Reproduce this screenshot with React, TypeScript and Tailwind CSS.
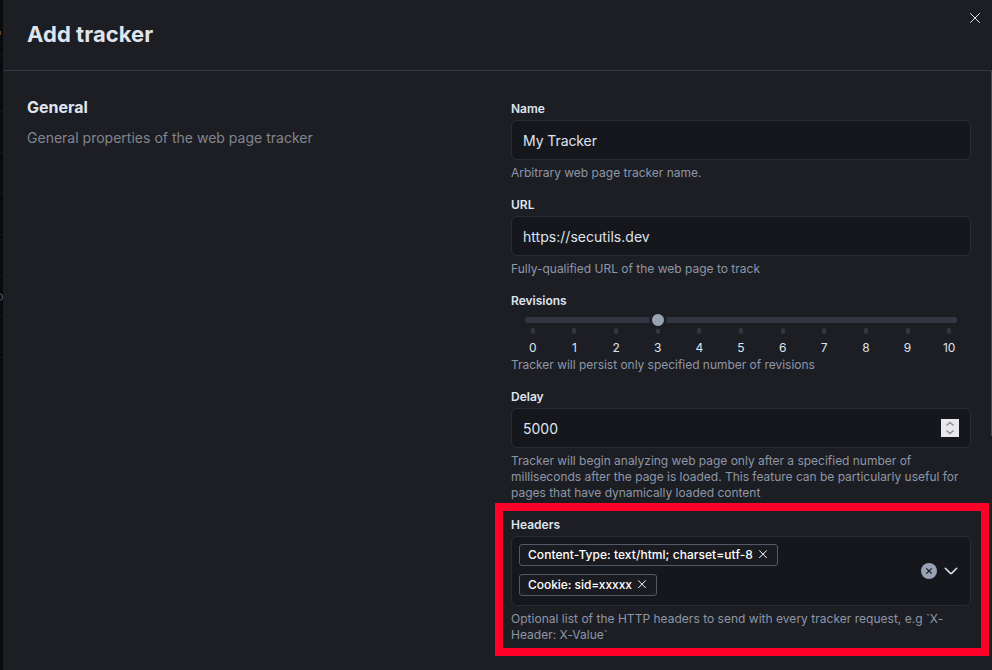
import type { ReactNode } from "react";

function Cross({ className }: { className: string }) {
  return (
    <svg viewBox="0 0 12 12" className={className} fill="none" stroke="currentColor" strokeLinecap="round">
      <path d="M1.5 1.5 10.5 10.5M10.5 1.5 1.5 10.5" />
    </svg>
  );
}

function Field({
  label,
  help,
  helpClass = "",
  children,
}: {
  label: string;
  help: string;
  helpClass?: string;
  children: ReactNode;
}) {
  return (
    <div className="flex flex-col">
      <label className="mb-[3px] h-4 text-xs leading-4 font-semibold text-[#dfe5ef]">{label}</label>
      {children}
      <p className={`pt-[5px] text-xs leading-4 text-[#8d96a7] ${helpClass}`}>{help}</p>
    </div>
  );
}

function TextBox({ value, valueClass = "", children }: { value: string; valueClass?: string; children?: ReactNode }) {
  return (
    <div className="flex h-10 items-center justify-between rounded-md border border-[#2b2c31] bg-[#16171c] px-[11px] text-sm text-[#dfe5ef]">
      <span className={`pt-0.5 ${valueClass}`}>{value}</span>
      {children}
    </div>
  );
}

function Chip({ text, textClass }: { text: string; textClass: string }) {
  return (
    <span className="flex h-[22px] items-center rounded-[3px] border border-[#535966] bg-[#1a1b20] px-2 text-xs font-medium text-white">
      <span className={textClass}>{text}</span>
      <svg viewBox="0 0 12 12" className="ml-1 size-3" fill="none" stroke="currentColor" strokeLinecap="round">
        <path d="M2.5 1.7 9.5 8.7M9.5 1.7 2.5 8.7" />
      </svg>
    </span>
  );
}

function RevisionSlider() {
  return (
    <div className="flex h-10 flex-col px-3.5 pt-[5px]">
      <div className="relative h-1.5 shrink-0 rounded-full bg-[#343741]">
        <span className="absolute top-[-6px] left-[124px] size-[18px] rounded-full border-[3px] border-[#1d1e24] bg-[#98a2b3]" />
      </div>
      <div className="-mx-[13px] mt-[5px] grid grid-cols-11">
        {Array.from({ length: 11 }, (_, i) => (
          <div key={i} className="flex flex-col items-center">
            <span className="h-1.5 w-1 rounded-[2px] bg-[#343741]" />
            <span className="mt-1.5 text-xs leading-4 text-[#dfe5ef]">{i}</span>
          </div>
        ))}
      </div>
    </div>
  );
}

export default function App() {
  return (
    <div className="flex h-[670px] w-[992px] overflow-hidden bg-[#1d1e24] font-['Inter',sans-serif]">
      <div className="relative w-[3px] shrink-0 overflow-hidden bg-[#090a0c]">
        <span className="absolute top-[31px] left-0 h-1 w-px bg-[#65472b]" />
        <span className="absolute top-[293px] -left-[5px] h-2 w-2 rounded-full border border-[#596168]" />
        {[54, 111, 152, 193, 234, 275, 316, 357].map((y) => (
          <span key={y} className="absolute left-0 h-px w-full bg-[#15161a]" style={{ top: y }} />
        ))}
      </div>
      <div className="relative flex min-w-0 flex-1 flex-col">
        <header className="flex h-[71px] shrink-0 items-start justify-between border-b border-[#343741] pl-6">
          <h1 className="pt-[18px] text-[22px] leading-8 font-bold tracking-[0.05px] text-[#dfe5ef]">Add tracker</h1>
          <button className="mt-3 mr-[11px] text-[#dfe5ef]" aria-label="Close">
            <Cross className="size-3" />
          </button>
        </header>
        <main className="flex flex-1 pl-6">
          <section className="w-[484px] shrink-0 pt-6">
            <h2 className="text-base leading-6 font-bold text-[#dfe5ef]">General</h2>
            <p className="mt-[7px] text-sm leading-6 tracking-[0.01px] text-[#81858f]">
              General properties of the web page tracker
            </p>
          </section>
          <form className="flex w-[460px] flex-col gap-4 pt-[30px]">
            <Field label="Name" help="Arbitrary web page tracker name.">
              <TextBox value="My Tracker" valueClass="tracking-[-0.08px]" />
            </Field>
            <Field label="URL" help="Fully-qualified URL of the web page to track">
              <TextBox value="https://secutils.dev" valueClass="tracking-[0.03px]" />
            </Field>
            <Field
              label="Revisions"
              help="Tracker will persist only specified number of revisions"
              helpClass="tracking-[-0.03px]"
            >
              <RevisionSlider />
            </Field>
            <Field
              label="Delay"
              help="Tracker will begin analyzing web page only after a specified number of milliseconds after the page is loaded. This feature can be particularly useful for pages that have dynamically loaded content"
              helpClass="tracking-[-0.015px]"
            >
              <TextBox value="5000">
                <svg className="h-[18px] w-[18px] bg-[#e9e9ed]" viewBox="0 0 18 18" fill="none" stroke="#8f8f9d" strokeWidth="1.6">
                  <path d="M5.5 6.5 9 3.5 12.5 6.5M5.5 11.5 9 14.5 12.5 11.5" />
                </svg>
              </TextBox>
            </Field>
            <Field
              label="Headers"
              help="Optional list of the HTTP headers to send with every tracker request, e.g `X-Header: X-Value`"
              helpClass="tracking-[0.02px]"
            >
              <div className="flex h-[70px] items-center justify-between rounded-md border border-[#2b2c31] bg-[#16171c] pr-3 pl-[7px]">
                <div className="flex flex-col items-start gap-2 pb-0.5">
                  <Chip text="Content-Type: text/html; charset=utf-8" textClass="tracking-[0.05px]" />
                  <Chip text="Cookie: sid=xxxxx" textClass="tracking-[-0.05px]" />
                </div>
                <div className="flex items-center gap-[7px]">
                  <svg className="size-4" viewBox="0 0 16 16" fill="none">
                    <circle cx="8" cy="8" r="8" fill="#98a2b3" />
                    <path d="M5.3 5.3 10.7 10.7M10.7 5.3 5.3 10.7" stroke="#16171c" strokeWidth="1.2" />
                  </svg>
                  <svg className="h-2 w-3.5" viewBox="0 0 14 8" fill="none" stroke="#dfe5ef" strokeWidth="1.5" strokeLinecap="round" strokeLinejoin="round">
                    <path d="M1.3 1.3 6.2 6.1Q7 6.8 7.8 6.1L12.7 1.3" />
                  </svg>
                </div>
              </div>
            </Field>
          </form>
        </main>
        <div className="absolute top-[71px] right-0 h-[365px] w-px bg-[#464953]" />
        <div className="absolute top-[503px] left-[492px] h-[153px] w-[494px] border-8 border-[#ff0029]" />
      </div>
    </div>
  );
}
